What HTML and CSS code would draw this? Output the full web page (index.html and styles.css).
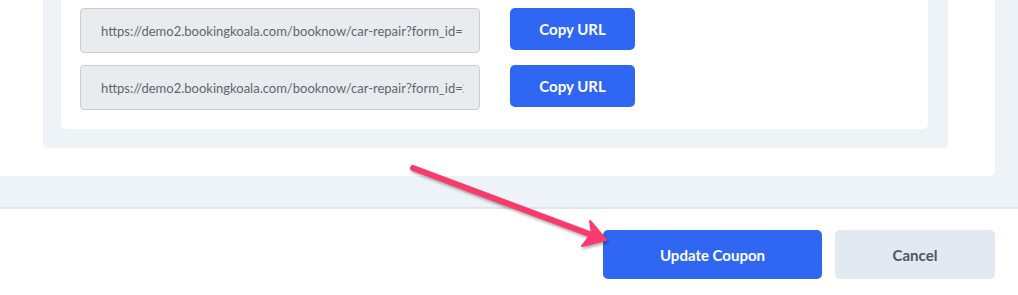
FILE: index.html
```html
<!DOCTYPE html>
<html>
<head>
  <title>Edit Coupon</title>
  <link rel="stylesheet" href="styles.css">
</head>
<body>
  <!-- Modal body with share links -->
  <div class="modal-body">
    <div class="card">
      <div class="panel">
        <div class="links">
          <div class="link-row">
            <input class="url-input" type="text" readonly value="https://demo2.bookingkoala.com/booknow/car-repair?form_id=1&amp;coupon=1">
            <button class="btn btn-copy">Copy URL</button>
          </div>
          <div class="link-row">
            <input class="url-input" type="text" readonly value="https://demo2.bookingkoala.com/booknow/car-repair?form_id=2&amp;coupon=1">
            <button class="btn btn-copy">Copy URL</button>
          </div>
        </div>
      </div>
    </div>
  </div>
  <!-- Footer actions -->
  <div class="modal-footer">
    <button class="btn btn-update">Update Coupon</button>
    <button class="btn btn-cancel">Cancel</button>
  </div>
  <!-- Annotation arrow drawn over the page -->
  <svg class="arrow" width="1018" height="295" viewBox="0 0 1018 295">
    <line x1="413" y1="168" x2="592" y2="235" stroke="#fb3a6c" stroke-width="6" stroke-linecap="round"/>
    <polygon points="606,240 590,221 592,233 582,246" fill="#fb3a6c" stroke="#fb3a6c" stroke-width="2" stroke-linejoin="round"/>
  </svg>
</body>
</html>
```

FILE: styles.css
```css
body {
  font-family: 'Lato', 'Liberation Sans', sans-serif;
  margin: 0;
  padding: 0;
  background: #fff;
  width: 1018px;
  height: 295px;
  overflow: hidden;
  position: relative;
}
.modal-body {
  background: #eef3f8; /* Light gray modal background */
  padding: 0 23px 31px 0;
}
.card {
  background: #fff;
  border-radius: 0 0 5px 0;
  padding: 0 47px 28px 43px;
}
.panel {
  background: #eef3f8;
  border-radius: 0 0 5px 5px;
  padding: 0 20px 19px 18px;
}
.links {
  background: #fff;
  border-radius: 0 0 5px 5px;
  padding: 8px 19px 19px 19px;
  display: flex;
  flex-direction: column;
  gap: 12px;
}
.link-row {
  display: flex;
  align-items: flex-start;
  gap: 30px;
}
.url-input {
  width: 400px;
  height: 45px;
  box-sizing: border-box;
  padding: 0 15px 0 20px;
  font-family: 'Lato', sans-serif;
  font-size: 13px;
  color: #5f6670;
  background: #e9ecef;
  border: 1px solid #c9ced4;
  border-radius: 4px;
  outline: none;
}
.btn {
  font-family: 'Lato', sans-serif;
  font-size: 15px;
  font-weight: 700;
  border: none;
  border-radius: 5px;
  cursor: pointer;
  padding: 0;
}
.btn-copy {
  width: 125px;
  height: 42px;
  background: #2f67f2; /* Blue copy button */
  color: #fff;
}
.modal-footer {
  border-top: 2px solid #e1e6ec;
  display: flex;
  justify-content: flex-end;
  gap: 13px;
  padding: 21px 23px 16px 0;
}
.btn-update {
  width: 219px;
  height: 49px;
  background: #2f67f2;
  color: #fff;
}
.btn-cancel {
  width: 160px;
  height: 49px;
  background: #e2e9f1;
  color: #4d5662;
}
.arrow {
  position: absolute;
  top: 0;
  left: 0;
  pointer-events: none;
  filter: drop-shadow(1px 2px 1.5px rgba(0,0,0,0.35));
}
```
